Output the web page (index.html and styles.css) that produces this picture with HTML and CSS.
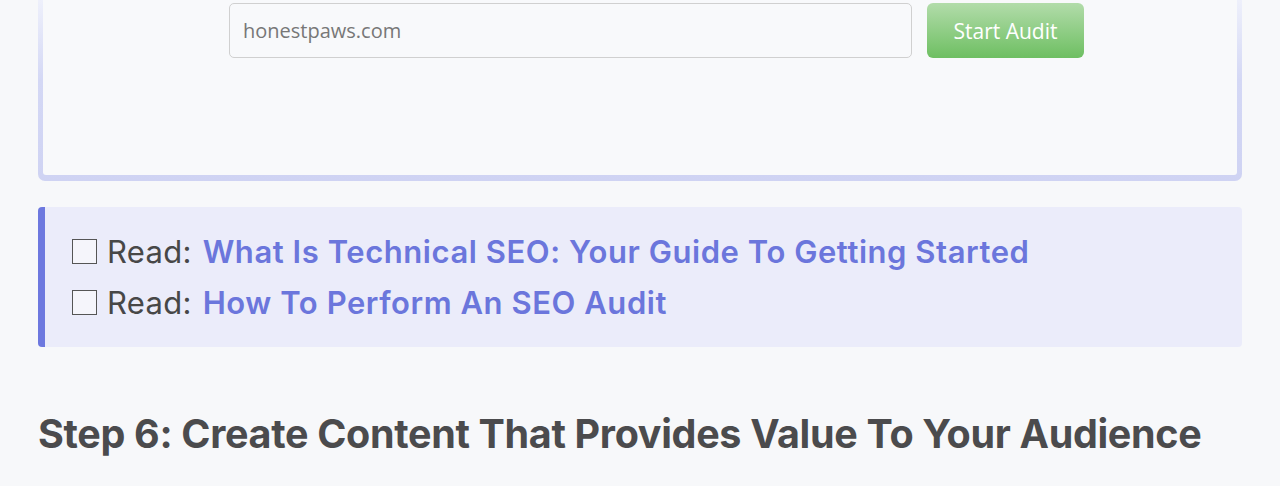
FILE: index.html
```html
<!DOCTYPE html>
<html lang="en">
<head>
<meta charset="utf-8">
<title>SEO Audit</title>
<link rel="stylesheet" href="styles.css">
</head>
<body>
<main class="page">
  <section class="audit-frame">
    <div class="audit-inner">
      <form class="audit-form">
        <input class="audit-input" type="text" value="honestpaws.com">
        <button class="audit-btn" type="button">Start Audit</button>
      </form>
    </div>
  </section>
  <aside class="callout">
    <p class="callout-line"><span class="box"></span><span class="read">Read:</span><a class="link" href="#">What Is Technical SEO: Your Guide To Getting Started</a></p>
    <p class="callout-line"><span class="box"></span><span class="read">Read:</span><a class="link" href="#">How To Perform An SEO Audit</a></p>
  </aside>
  <h2 class="step">Step 6: Create Content That Provides Value To Your Audience</h2>
</main>
</body>
</html>
```
FILE: styles.css
```css
html, body {
  margin: 0;
  background: #f7f8fa;
}
body {
  font-family: Inter, "Liberation Sans", sans-serif;
}
.page {
  padding: 0 38px;
}
.audit-frame {
  background: linear-gradient(to bottom, #eef0fb 0, #d4d8f5 80px, #cfd3f3 100%);
  padding: 0 5px 6px;
  border-radius: 0 0 7px 7px;
}
.audit-inner {
  background: #f8f9fb;
  height: 172px;
  padding: 3px 0 0 186px;
  border-radius: 0 0 3px 3px;
}
.audit-form {
  display: flex;
  gap: 15px;
  margin: 0;
}
.audit-input {
  box-sizing: border-box;
  width: 683px;
  height: 55px;
  border: 1px solid #d0d0d0;
  border-radius: 5px;
  background: #f8f9fb;
  padding: 0 13px;
  font-family: "Open Sans", "Noto Sans", sans-serif;
  font-size: 20px;
  color: #777;
  outline: none;
}
.audit-btn {
  width: 157px;
  height: 55px;
  border: none;
  border-radius: 6px;
  background: linear-gradient(to bottom, #b2dcaa, #6ebf62);
  color: #fff;
  font-family: "Open Sans", "Noto Sans", sans-serif;
  font-size: 21px;
  padding: 0;
}
.callout {
  margin-top: 26px;
  height: 140px;
  box-sizing: border-box;
  background: #ebecfa;
  border-left: 7px solid #6d78df;
  border-radius: 4px;
  padding: 19px 0 0 27px;
}
.callout-line {
  margin: 0;
  height: 51px;
  line-height: 51px;
  font-size: 31px;
  color: #474747;
  display: flex;
  align-items: center;
  white-space: nowrap;
}
.box {
  box-sizing: border-box;
  width: 25px;
  height: 25px;
  border: 1.5px solid #555;
  background: #f5f5fb;
  margin-right: 10px;
}
.read {
  margin-right: 11px;
  letter-spacing: 0.3px;
}
.link {
  color: #6b76dc;
  font-weight: 600;
  letter-spacing: 0.55px;
  text-decoration: none;
}
.step {
  margin: 63px 0 0;
  font-size: 39.5px;
  line-height: 48px;
  font-weight: 700;
  letter-spacing: -0.33px;
  color: #4b4b4d;
}
```
